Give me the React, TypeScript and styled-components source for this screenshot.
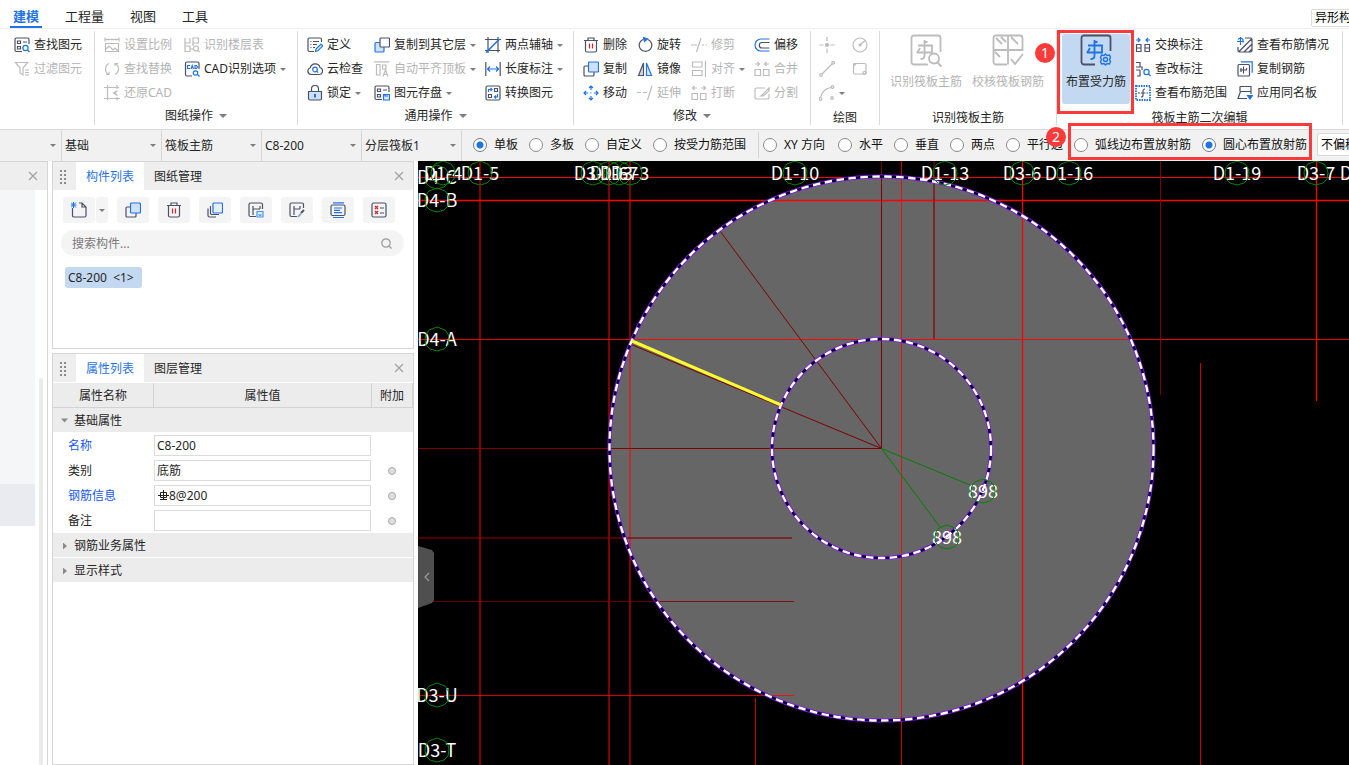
import React from 'react';
import styled, { createGlobalStyle, css } from 'styled-components';

const ink = '#4b5166';
const blue = '#1f73e6';
const mute = '#bcbcbc';
const red = '#e02020';
const mark = '#fb3a3a';

const Global = createGlobalStyle`
  * { box-sizing: border-box; }
  html, body, #root { height: 100%; }
  body { margin: 0; overflow: hidden; background: #fff; }
  body, button, input, select {
    font-family: "Noto Sans", "Noto Sans CJK SC", sans-serif;
    font-size: 12px;
    line-height: 16px;
    color: #262626;
  }
  button { border: 0; padding: 0; background: none; cursor: pointer; }
`;

/* ---------- icons ---------- */

const Svg = styled.svg<{ $c?: string; $bold?: boolean }>`
  flex: none;
  display: block;
  fill: none;
  stroke: ${p => p.$c || ink};
  stroke-width: ${p => (p.$bold ? 1.8 : 1.2)};
`;

const drawings: Record<string, React.ReactNode> = {
  find: <><path d="M8 14.500H2.500a1.500 1.500 0 0 1-1.500-1.500V2.500A1.500 1.500 0 0 1 2.500 1h11A1.500 1.500 0 0 1 15 2.500V7M3.500 4h3v2.500h-3zM3.500 9.500h3V12h-3zM9 5h4" /><g stroke={blue}><circle cx="11.500" cy="11" r="2.600" /><path d="M13.500 13l2 2" /></g></>,
  filter: <path d="M1.500 1.500h12L9 7v7L6 12V7zM11 9h4M11 11.500h4M11 14h4" />,
  scale: <path d="M1 2.500h14M1 .5v4M15 .5v4M4 1.500v2M8 1.500v2M12 1.500v2M1.500 6.500h13v8h-13zM2 12l3-3 4 4 2-2 3 3" />,
  floorTable: <><path d="M1 1v5h5V1M9 1h5.500v5H9zM1 9h5v5.500H1zM9 6v3M6 12h3M1 6v3" /><circle cx="12" cy="11.500" r="2.500" /><path d="M14 13.500l1.500 1.500" /></>,
  replace: <path d="M5 2.500A6.300 6.300 0 0 0 4.500 13.500M2 13.500h3V11M11 13.500A6.300 6.300 0 0 0 11.500 2.500M14 2.500H11V5" />,
  cad: <><path d="M8 15H3a1.500 1.500 0 0 1-1.500-1.500V2.500A1.500 1.500 0 0 1 3 1h10.500A1.500 1.500 0 0 1 15 2.500V8" /><g stroke={blue}><path d="M6 4.500H3.500v3H6M7 8l1.200-3.500L9.500 8M11 4.500v3h1.500l1-1.500-1-1.500z" /><circle cx="11.500" cy="12" r="2.200" /><path d="M13.500 13.500l2 2" /></g></>,
  restore: <path d="M3.500 0v15M0 2.500h15M0 13.500h16M13 0v4M13 12v3.500M13.500 5.500L9.500 8l4 2.500M9.500 8h3" />,
  define: <><path d="M7 14.500H2.500A1.500 1.500 0 0 1 1 13V2.500A1.500 1.500 0 0 1 2.500 1H13a1.500 1.500 0 0 1 1.500 1.500V5M3.500 4.500h1M6 4.500h6M3.500 7.500h1M6 7.500h4M3.500 10.500h1M6 10.500h2" /><path stroke={blue} fill="#dcebff" d="M8.500 14.500l.5-2.500 5-5 1.800 1.800-5 5z" /></>,
  cloud: <><path d="M4 13.500a3.500 3.500 0 0 1-.7-6.800A5 5 0 0 1 13 6.500a3.600 3.600 0 0 1-.5 7z" /><g stroke={blue}><circle cx="8" cy="8.500" r="2.300" /><path d="M9.700 10.200l1.500 1.500" /></g></>,
  lock: <><path fill="#cfe1fa" d="M1.500 6.500h13v7a1.500 1.500 0 0 1-1.500 1.500H3a1.500 1.500 0 0 1-1.500-1.500z" /><path d="M4.500 6.500V4a3.500 3.500 0 0 1 7 0v2.500" /><path stroke={blue} strokeWidth="2" d="M8 9v3.500" /></>,
  copyLayer: <><rect x="1" y="5.500" width="9" height="9.500" rx="1" fill="#cfe1fa" stroke={blue} /><rect x="6" y="1" width="9.500" height="9" rx="1" fill="#fff" /></>,
  alignTop: <path d="M0 .8h15.500M2.500 3.500H6V14H2.500zM8.500 4H12v4H8.500zM9 15.500l2.500-6.500 2.500 6.500M10 13.500h3" />,
  save: <><path d="M8 14.500H2.500A1.500 1.500 0 0 1 1 13V2.500A1.500 1.500 0 0 1 2.500 1h11A1.500 1.500 0 0 1 15 2.500V7M3.500 4h3v2.500h-3zM3.500 9.500h3V12h-3zM9 5h4" /><path fill="#dcebff" stroke={blue} d="M9.500 9.500h6v5.500h-6zM11 9.500V11h3" /></>,
  axis: <><path d="M3 0v16M0 2.500h16M0 13.500h15M13 0v15.500" /><path stroke={blue} strokeWidth="1.600" d="M1 15.500L14.500 2" /></>,
  length: <><path d="M.8 1v14M15.200 1v14" /><path stroke={blue} d="M2.500 8h11M5 5.500L2.500 8 5 10.500M11 5.500L13.500 8 11 10.500" /></>,
  convert: <><rect x="1" y="1" width="14" height="14" rx="1.500" /><path d="M9.500 3.500h3v3h-3zM3.500 9.500h3v3h-3z" /><path stroke={blue} d="M3.500 7V4.500h3M5.500 3l1.500 1.500L5.500 6M12.500 9v3h-3M11 10.500L9.500 12l1.500 1.500" /></>,
  trash: <><path d="M5 3V1h6v2M1 3.500h14M2.500 3.500v10A1.500 1.500 0 0 0 4 15h8a1.500 1.500 0 0 0 1.500-1.500v-10" /><path stroke={red} d="M6.500 6.500v5M9.500 6.500v5" /></>,
  rotate: <><path d="M10.500 2.200a6.300 6.300 0 1 1-4 0" /><path stroke={blue} fill={blue} d="M6.500 .5L10.500 2 7.500 4.500z" /></>,
  trim: <path d="M0 8h6M11 8h2M14.500 8h1.500M10 1L5.500 15" />,
  offset: <><path stroke={blue} d="M15.500 2H7a6 6 0 0 0 0 12h8.500" /><path d="M15.500 5.500H8a2.700 2.700 0 0 0 0 5.500h7.500" /></>,
  copy: <><rect x="1" y="5" width="10" height="10" rx="1" /><rect x="5.500" y="1" width="10" height="10" rx="1" fill="#cfe1fa" stroke={blue} /></>,
  mirror: <><path d="M6.500 2v12.500H1.500z" fill="#d6d9e2" /><path stroke={blue} fill="#dcebff" d="M9.500 2v12.500h5z" /></>,
  alignTo: <path d="M1.500 1h9.500v5H1.500zM1.500 9.500h9.500v5H1.500zM14.500 0v16" />,
  merge: <path d="M1 8.500h5.500v6H1zM9.500 8.500H15v6H9.500zM1 3h4.500M3.500 1l2 2-2 2M15 3h-4.500M12.500 1l-2 2 2 2" />,
  move: <path stroke={blue} d="M8 1v4M8 11v4M1 8h4M11 8h4M6 3l2-2 2 2M6 13l2 2 2-2M3 6L1 8l2 2M13 6l2 2-2 2M7.500 8h1" />,
  extend: <path d="M0 7.500h4M6 7.500h4M15 1l-4.500 14" />,
  breakUp: <path d="M1 8.500h5.500v6H1zM9.500 8.500H15v6H9.500zM6 3H1.500M3.500 1l-2 2 2 2M10 3h4.500M12.500 1l2 2-2 2" />,
  split: <path d="M11 3H2.500A1.500 1.500 0 0 0 1 4.500v8A1.500 1.500 0 0 0 2.500 14h11a1.500 1.500 0 0 0 1.500-1.500V9M7 11l8-8v3l-6 5z" />,
  point: <><path d="M8 0v4M8 11.500V16M.5 8h4M11.500 8h4" /><circle cx="8" cy="8" r="1.500" fill={mute} /></>,
  circle: <><circle cx="8" cy="8" r="7" /><path d="M8 8l5-4.500" /><circle cx="8" cy="8" r="1" /></>,
  line: <><path d="M3 13L13.500 2.500" /><circle cx="2" cy="14" r="1.300" /><circle cx="14.200" cy="1.800" r="1.300" /></>,
  rect: <><rect x="1.500" y="2.500" width="12.500" height="10.500" rx="1.500" /><circle cx="12.500" cy="12" r="1.500" /><circle cx="2.500" cy="3.500" r=".8" /></>,
  arc: <><path d="M1.500 12.500A12 12 0 0 1 12 2.500" /><circle cx="1.500" cy="14" r="1.300" /><circle cx="13.500" cy="2" r="1.300" /><circle cx="13" cy="13" r="1.300" /></>,
  swap: <><path stroke={blue} d="M1 3h4M3 1l2 2-2 2M15 3h-4M13 1l-2 2 2 2" /><path d="M1.500 7.500h4.500v7H1.500zM1.500 11h4.500M10 7.500h4.500v7H10zM10 11h4.500" /></>,
  modify: <><path d="M1 1.500h4v4M1 6h6v3M5 9v6H2M1 9h4" /><g stroke={blue}><circle cx="11.500" cy="11" r="2.600" /><path d="M13.500 13l2 2" /></g></>,
  range: <><rect x="1" y="1" width="14" height="14" stroke={blue} strokeWidth="1.800" strokeDasharray="1.500 1" /><path d="M3 8h2M6 8h4.500M11.500 8H13M10 4a2 2 0 0 0-2 2v4a2 2 0 0 1-2 2" /></>,
  status: <><path d="M8 1h5.500A1.500 1.500 0 0 1 15 2.500v11a1.500 1.500 0 0 1-1.500 1.500h-11A1.500 1.500 0 0 1 1 13.500V10M2 14.500L14.500 2M7 15l8-8M12 15l3-3" /><path stroke={blue} d="M0 4.500h7M3.500 0v8M1 2.500a3 3 0 0 1 5 0v3" /></>,
  copyBar: <><path stroke={blue} d="M4 .8h11.200v11" /><rect x="1" y="3.500" width="11.500" height="11.500" rx="1" /><path d="M3 9h7M6.500 5.500v7M9.500 7v2M4 7v4" /></>,
  apply: <><path d="M3 1.500h11v5H3.500L1 13.500h9M14 6.500V9M3 1.500v5" /><path stroke={blue} fill={blue} d="M10.500 10.500h5L13 14z" /></>,
  newDoc: <><path d="M1.500 6v8A1.500 1.500 0 0 0 3 15h10.500a1.500 1.500 0 0 0 1.500-1.500V5l-4-4H8M11 1v4h4" /><path stroke={blue} strokeWidth="1" d="M0 .5l5 5M0 5.500l5-5M2.500 0v6M0 3h5.500" /></>,
  copies: <><path d="M9 15H2.500A1.500 1.500 0 0 1 1 13.500V6.500" /><rect x="6" y="1" width="9.500" height="10" rx="1" fill="#e6f0fd" stroke={blue} /><path d="M3.500 4v7A1.500 1.500 0 0 0 5 12.500h7" /></>,
  saveTo: <><path d="M8 14.500H2.500A1.500 1.500 0 0 1 1 13V2.500A1.500 1.500 0 0 1 2.500 1H13a1.500 1.500 0 0 1 1.500 1.500V7M5 4v9M5 7h7M12 4v3" /><path fill="#dcebff" stroke="#4c96ee" d="M9 9.500h6V15H9zM10.500 12.500l1.500 1 1.500-1" /></>,
  pick: <><path d="M8 14.500H2.500A1.500 1.500 0 0 1 1 13V2.500A1.500 1.500 0 0 1 2.500 1H13a1.500 1.500 0 0 1 1.500 1.500V6M5 4v9M5 7h6M11 4v3" /><path strokeWidth="2" d="M12 11l3-3" /><path stroke="#8aa4cc" strokeWidth="1.800" d="M9 15l3.500-4" /></>,
  listUp: <><rect x="1" y="3" width="14" height="10.500" rx="1.500" /><path stroke={blue} d="M3 .8h11M3 15.500h11M4 6h8M4 8.300h6M4 10.600h8" /></>,
  checklist: <><rect x="1" y="1" width="14" height="14" rx="1.500" /><path d="M9 6h4M9 11h4" /><path stroke={red} d="M4 4l3 3M7 4l-3 3M4 9l3 3M7 9l-3 3" /></>,
};

const Icon = ({ n, c }: { n: string; c?: string }) => (
  <Svg width="16" height="16" viewBox="0 0 16 16" $c={c} aria-hidden="true">{drawings[n]}</Svg>
);

const Caret = styled.i<{ $big?: boolean }>`
  flex: none;
  width: 0;
  height: 0;
  border: ${p => (p.$big ? 4 : 3)}px solid transparent;
  border-top-color: #7d7d7d;
  border-bottom: 0;
`;

const Cross = () => (
  <Svg width="10" height="10" viewBox="0 0 10 10" $c="#a2a2a2" aria-hidden="true"><path d="M1 1l8 8M9 1L1 9" /></Svg>
);

/* ---------- page frame ---------- */

const Page = styled.div`
  display: flex;
  flex-direction: column;
  height: 100vh;
  overflow: hidden;
`;

const MenuBar = styled.nav`
  display: flex;
  flex: none;
  gap: 20px;
  height: 29px;
  padding-left: 10px;
  border-bottom: 1px solid #efefef;
`;

const MenuTab = styled.button<{ $on?: boolean }>`
  padding: 5px 3px 0;
  font-size: 13px;
  line-height: 20px;
  border-bottom: 2px solid transparent;
  ${p => p.$on && css`color: ${blue}; font-weight: 700; border-color: ${blue};`}
`;

const MenuExtra = styled.div`
  margin: 9px 0 0 auto;
  width: 38px;
  overflow: hidden;
`;

const ExtraButton = styled.button`
  height: 18px;
  width: 60px;
  padding-left: 3px;
  text-align: left;
  border: 1px solid #dcdcdc;
  border-radius: 2px;
  color: #000;
`;

/* ---------- ribbon ---------- */

const Ribbon = styled.div`
  display: flex;
  flex: none;
  height: 101px;
  padding-top: 2px;
  border-bottom: 1px solid #d9d9d9;
`;

const Group = styled.section<{ $w: number }>`
  display: flex;
  flex: none;
  flex-direction: column;
  width: ${p => p.$w}px;
  height: 94px;
  border-right: 1px solid #dadada;
`;

const GroupBody = styled.div<{ $pad: number }>`
  display: flex;
  flex: none;
  height: 76px;
  padding: 2px 0 0 ${p => p.$pad}px;
`;

const Column = styled.div<{ $w: number }>`
  flex: none;
  width: ${p => p.$w}px;
`;

const Tool = styled.button<{ $off?: boolean }>`
  display: flex;
  align-items: center;
  gap: 4px;
  height: 24px;
  white-space: nowrap;
  ${p => p.$off && css`color: #b4b4b4;`}
`;

const GroupTitle = styled.div<{ $low?: boolean }>`
  display: flex;
  align-items: center;
  justify-content: center;
  gap: 6px;
  height: 18px;
  padding-top: ${p => (p.$low ? 4 : 0)}px;
`;

type Item = { i: string; t?: string; off?: boolean; drop?: boolean };

const Tools = ({ w, items }: { w: number; items: Item[] }) => (
  <Column $w={w}>
    {items.map(x => (
      <Tool key={x.i} $off={x.off} disabled={x.off} aria-label={x.t || x.i}>
        <Icon n={x.i} c={x.off ? mute : undefined} />
        {x.t}
        {x.drop && <Caret />}
      </Tool>
    ))}
  </Column>
);

const BigTool = styled.button<{ $state?: 'on' | 'off' }>`
  position: relative;
  display: flex;
  flex: none;
  flex-direction: column;
  align-items: center;
  gap: 6px;
  width: ${p => (p.$state === 'on' ? 68 : 82)}px;
  height: 70px;
  margin-top: 1px;
  border-radius: 3px;
  white-space: nowrap;
  ${p => (p.$state === 'on' ? css`background: #c2d9f1;` : css`color: #b4b4b4;`)}
`;

const Highlight = styled.span<{ $inset: string }>`
  position: absolute;
  z-index: 3;
  inset: ${p => p.$inset};
  border: 3px solid ${mark};
  pointer-events: none;
`;

const Badge = styled.span<{ $x: number; $y: number }>`
  position: absolute;
  z-index: 4;
  left: ${p => p.$x}px;
  top: ${p => p.$y}px;
  width: 20px;
  height: 20px;
  border-radius: 50%;
  background: ${mark};
  color: #fff;
  font-size: 14px;
  line-height: 20px;
  text-align: center;
`;

const BarGlyph = () => <path d="M8 11.500h14V18M7 18.500h16M10 14l-3 5M14.500 6v16q0 3-4 3M14.500 8h3" />;

/* ---------- option bar ---------- */

const OptionBar = styled.div`
  position: relative;
  z-index: 2;
  display: flex;
  flex: none;
  align-items: flex-start;
  height: 31px;
  background: #f1f1f1;
`;

const Pick = styled.div<{ $w: number }>`
  display: flex;
  flex: none;
  align-items: center;
  width: ${p => p.$w}px;
  height: 31px;
  padding-right: 5px;
  border-right: 1px solid #d6d6d6;
`;

const Select = styled.select`
  appearance: none;
  flex: 1;
  min-width: 0;
  height: 24px;
  padding: 0 0 0 3px;
  border: 0;
  background: none;
`;

const Radios = styled.div<{ $gap: number }>`
  position: relative;
  display: flex;
  flex: none;
  align-items: center;
  gap: 11px;
  height: 29px;
  margin-left: ${p => p.$gap}px;
`;

const RadioLabel = styled.label`
  display: flex;
  align-items: center;
  gap: 7px;
  color: #111;
  white-space: nowrap;
`;

const Radio = styled.input`
  appearance: none;
  width: 14px;
  height: 14px;
  margin: 0;
  border: 1px solid #8a8a8a;
  border-radius: 50%;
  background: #fff;
  &:checked { background: radial-gradient(circle, ${blue} 3px, #fff 4px); border-color: #6a7a90; }
`;

const Rule = styled.span`
  flex: none;
  width: 1px;
  height: 26px;
  margin: 2px 0 0 12px;
  background: #d4d4d4;
`;

const OffsetSelect = styled.select`
  appearance: none;
  flex: none;
  width: 90px;
  height: 23px;
  margin: 3px 0 0 10px;
  padding: 0 3px;
  border: 1px solid #d9d9d9;
  border-radius: 2px;
  background: #fff;
  color: #000;
`;

const RadioSet = ({ name, items, on, gap, children }: { name: string; items: string[]; on?: string; gap: number; children?: React.ReactNode }) => (
  <Radios $gap={gap}>
    {items.map(t => (
      <RadioLabel key={t}><Radio type="radio" name={name} defaultChecked={t === on} />{t}</RadioLabel>
    ))}
    {children}
  </Radios>
);

/* ---------- side panels ---------- */

const Work = styled.div`
  display: flex;
  flex: 1;
  min-height: 0;
`;

const Stub = styled.aside`
  display: flex;
  flex: none;
  flex-direction: column;
  width: 48px;
  border: solid #d6d6d6;
  border-width: 1px 1px 0 0;
`;

const StubHead = styled.div`
  display: flex;
  flex: none;
  align-items: center;
  justify-content: flex-end;
  height: 28px;
  padding-right: 9px;
  background: #eeeeef;
`;

const StubBody = styled.div`
  display: flex;
  flex: 1;
  justify-content: space-between;
  padding-right: 4px;
`;

const Tree = styled.div`
  width: 35px;
  height: 336px;
  padding-top: 294px;
  background: #f5f6f8;
`;

const TreeRow = styled.div`
  height: 42px;
  background: #e9ebf0;
`;

const Scroll = styled.div`
  width: 4px;
  margin-top: 188px;
  border-radius: 2px;
  background: #ebebeb;
`;

const Side = styled.aside`
  display: flex;
  flex: none;
  flex-direction: column;
  gap: 4px;
  width: 370px;
  padding: 0 4px;
`;

const Panel = styled.section<{ $h?: number }>`
  flex: ${p => (p.$h ? 'none' : 1)};
  height: ${p => (p.$h ? `${p.$h}px` : 'auto')};
  border: 1px solid #d6d6d6;
  background: #fff;
`;

const PanelHead = styled.div`
  display: flex;
  align-items: center;
  height: 28px;
  padding: 0 9px 0 6px;
  background: #eeeeef;
  button:last-child { margin-left: auto; }
`;

const Grip = styled.i`
  width: 7px;
  height: 15px;
  margin-right: 10px;
  background: radial-gradient(circle, #8b8b8b 1px, transparent 1px) 0 0 / 4px 4px;
`;

const PanelTab = styled.button<{ $on?: boolean }>`
  width: 68px;
  height: 28px;
  padding-top: 2px;
  ${p => p.$on && css`background: #fff; color: ${blue};`}
`;

const Actions = styled.div`
  display: flex;
  gap: 9px;
  padding: 7px 10px;
`;

const Action = styled.button<{ $w?: number }>`
  display: flex;
  align-items: center;
  justify-content: center;
  width: ${p => p.$w || 32}px;
  height: 26px;
  border-radius: 3px;
  background: #f4f4f4;
`;

const Pair = styled.div`
  display: flex;
  gap: 1px;
`;

const Search = styled.label`
  display: flex;
  align-items: center;
  height: 26px;
  margin: 0 9px 0 8px;
  padding: 0 12px 0 11px;
  border-radius: 13px;
  background: #f4f4f4;
`;

const SearchInput = styled.input`
  flex: 1;
  padding: 1px 0 0;
  border: 0;
  outline: 0;
  background: none;
  &::placeholder { color: #7a7a7a; opacity: 1; }
`;

const Part = styled.button`
  min-width: 77px;
  height: 21px;
  margin: 11px 12px;
  padding: 0 3px;
  border-radius: 3px;
  background: #c2d9f1;
  text-align: left;
  white-space: pre;
`;

const Table = styled.table`
  width: 360px;
  margin-top: 1px;
  table-layout: fixed;
  border-collapse: separate;
  border-spacing: 0;
`;

const Head = styled.th`
  height: 25px;
  padding: 2px 0 0;
  font-weight: 400;
  background: #ececec;
  border: solid #d3d3d3;
  border-width: 0 1px 1px 0;
`;

const Section = styled.th`
  height: 25px;
  padding: 2px 0 0 8px;
  text-align: left;
  background: #ececec;
  border-bottom: 1px solid #fff;
`;

const SectionButton = styled.button`
  display: flex;
  align-items: center;
  gap: 6px;
`;

const Twist = styled.i<{ $open?: boolean }>`
  width: 7px;
  height: 7px;
  background: #8a8a8a;
  clip-path: ${p => (p.$open ? 'polygon(0 1px, 100% 1px, 50% 5px)' : 'polygon(2px 0, 6px 50%, 2px 100%)')};
`;

const Name = styled.th<{ $key?: boolean }>`
  height: 25px;
  padding: 0 0 0 15px;
  text-align: left;
  font-weight: 400;
  color: ${p => (p.$key ? '#1657f5' : '#262626')};
`;

const Cell = styled.td`
  height: 25px;
  padding: 0 1px 0 0;
`;

const Field = styled.div`
  display: flex;
  align-items: center;
  height: 21px;
  padding-left: 2px;
  border: 1px solid #dcdcdc;
`;

const FieldInput = styled.input`
  flex: 1;
  min-width: 0;
  height: 16px;
  padding: 0;
  border: 0;
  outline: 0;
  background: none;
`;

const Dot = styled.input`
  appearance: none;
  display: block;
  width: 8px;
  height: 8px;
  margin: 0 auto;
  border: 1px solid #a8a8a8;
  border-radius: 50%;
  background: #dedede;
`;

const rows = [
  { name: '名称', value: 'C8-200', key: true },
  { name: '类别', value: '底筋', extra: true },
  { name: '钢筋信息', value: '8@200', key: true, extra: true, rebar: true },
  { name: '备注', value: '', extra: true },
];

/* ---------- drawing area ---------- */

const Stage = styled.main`
  position: relative;
  flex: 1;
  min-width: 0;
  overflow: hidden;
  background: #000;
`;

const Drawing = styled.svg`
  display: block;
  width: 100%;
  height: 100%;
  fill: none;
  text {
    fill: #fff;
    font-family: "Noto Sans CJK SC", sans-serif;
    font-size: 18px;
    text-anchor: middle;
  }
`;

const Handle = styled.button`
  position: absolute;
  left: 0;
  top: 385px;
  width: 16px;
  height: 62px;
  background: #4f4f4f;
  clip-path: polygon(0 0, 14px 4px, 100% 7px, 100% 54px, 14px 57px, 0 100%);
  svg { margin: 0 auto; }
`;

const labels: [number, number, string][] = [
  [437, 177, 'D4-C'], [443, 173, 'D1-4'], [480, 173, 'D1-5'],
  [593, 173, 'D3-1'], [609, 173, 'D1-6'], [619, 173, 'D1-7'], [630, 173, 'D3-3'],
  [795, 173, 'D1-10'], [945, 173, 'D1-13'], [1022, 173, 'D3-6'], [1069, 173, 'D1-16'],
  [1237, 173, 'D1-19'], [1316, 173, 'D3-7'], [1364, 173, 'D1-22'],
  [437, 200, 'D4-B'], [437, 339, 'D4-A'], [437, 695, 'D3-U'], [437, 750, 'D3-T'],
  [983, 491, '898'], [947, 537, '898'],
];

const Ring = ({ r }: { r: number }) => (
  <>
    <circle cx="881.500" cy="448.500" r={r} stroke="#9010ff" strokeWidth="4" />
    <circle cx="881.500" cy="448.500" r={r} stroke="#000030" strokeWidth="2.400" />
    <circle cx="881.500" cy="448.500" r={r} stroke="#fff" strokeWidth="2.400" strokeDasharray="7.500 4.500" />
  </>
);

const Plan = () => (
  <Drawing role="img" aria-label="筏板主筋">
    <g transform="translate(-418 -161)">
      <circle cx="881.500" cy="448.500" r="272" fill="#666" />
      <path stroke="#f00" strokeOpacity=".5" strokeWidth="2" d="M480 161V2000M609 161V2000M630 161V2000" />
      <g stroke="#f00">
        <path d="M418 177.500H3000" />
        <path d="M1022.500 161V2000M1316.500 161V401M418 200.500H3000" strokeWidth="1.300" />
        <path strokeOpacity=".8" d="M901.500 161V2000M1200.500 363V2000M755.500 698V2000M418 695.500H794" />
        <path strokeOpacity=".9" d="M418 339.500H3000" />
      </g>
      <g stroke="#800000">
        <path d="M881.500 161V448.500L720 231M881.500 448.500L630 344M418 448.500H881M1160.500 161V395" />
        <path strokeOpacity=".6" strokeWidth="2" d="M934 161V339M418 538H792" />
        <path strokeOpacity=".8" d="M418 601.500H794" />
      </g>
      <path stroke="#008000" d="M881.500 448.500L970 485M881.500 448.500L940 527" />
      <Ring r={272} />
      <Ring r={109.5} />
      <path stroke="#ffff30" strokeWidth="3" d="M632 341L781 405" />
      {labels.map(([x, y, t]) => (
        <g key={t + x} transform={`translate(${x} ${y})`}>
          <text y="7">{t}</text>
          <path stroke="#008400" d="M0-12L8-9 11-5 12 0 11 6 7 10 0 12-7 10-11 6-12 0-11-5-8-9z" />
        </g>
      ))}
    </g>
  </Drawing>
);

const picks: [number, string][] = [[62, ''], [100, '基础'], [100, '筏板主筋'], [100, 'C8-200'], [100, '分层筏板1']];

const actions: [string, string][] = [
  ['copy', '复制'], ['trash', '删除'], ['copies', '层间复制'], ['saveTo', '存档'],
  ['pick', '提取'], ['listUp', '排序'], ['checklist', '过滤'],
];

export default function App() {
  return (
    <Page>
      <Global />
      <MenuBar>
        <MenuTab $on>建模</MenuTab>
        <MenuTab>工程量</MenuTab>
        <MenuTab>视图</MenuTab>
        <MenuTab>工具</MenuTab>
        <MenuExtra><ExtraButton>异形构</ExtraButton></MenuExtra>
      </MenuBar>

      <Ribbon>
        <Group $w={95}>
          <GroupBody $pad={14}>
            <Tools w={80} items={[{ i: 'find', t: '查找图元' }, { i: 'filter', t: '过滤图元', off: true }]} />
          </GroupBody>
        </Group>
        <Group $w={203}>
          <GroupBody $pad={9}>
            <Tools w={80} items={[{ i: 'scale', t: '设置比例', off: true }, { i: 'replace', t: '查找替换', off: true }, { i: 'restore', t: '还原CAD', off: true }]} />
            <Tools w={110} items={[{ i: 'floorTable', t: '识别楼层表', off: true }, { i: 'cad', t: 'CAD识别选项', drop: true }]} />
          </GroupBody>
          <GroupTitle>图纸操作<Caret $big /></GroupTitle>
        </Group>
        <Group $w={276}>
          <GroupBody $pad={9}>
            <Tools w={67} items={[{ i: 'define', t: '定义' }, { i: 'cloud', t: '云检查' }, { i: 'lock', t: '锁定', drop: true }]} />
            <Tools w={111} items={[{ i: 'copyLayer', t: '复制到其它层', drop: true }, { i: 'alignTop', t: '自动平齐顶板', off: true, drop: true }, { i: 'save', t: '图元存盘', drop: true }]} />
            <Tools w={84} items={[{ i: 'axis', t: '两点辅轴', drop: true }, { i: 'length', t: '长度标注', drop: true }, { i: 'convert', t: '转换图元' }]} />
          </GroupBody>
          <GroupTitle>通用操作<Caret $big /></GroupTitle>
        </Group>
        <Group $w={237}>
          <GroupBody $pad={9}>
            <Tools w={54} items={[{ i: 'trash', t: '删除' }, { i: 'copy', t: '复制' }, { i: 'move', t: '移动' }]} />
            <Tools w={54} items={[{ i: 'rotate', t: '旋转' }, { i: 'mirror', t: '镜像' }, { i: 'extend', t: '延伸', off: true }]} />
            <Tools w={63} items={[{ i: 'trim', t: '修剪', off: true }, { i: 'alignTo', t: '对齐', off: true, drop: true }, { i: 'breakUp', t: '打断', off: true }]} />
            <Tools w={44} items={[{ i: 'offset', t: '偏移' }, { i: 'merge', t: '合并', off: true }, { i: 'split', t: '分割', off: true }]} />
          </GroupBody>
          <GroupTitle>修改<Caret $big /></GroupTitle>
        </Group>
        <Group $w={69}>
          <GroupBody $pad={8}>
            <Tools w={33} items={[{ i: 'point', off: true }, { i: 'line', off: true }, { i: 'arc', off: true, drop: true }]} />
            <Tools w={20} items={[{ i: 'circle', off: true }, { i: 'rect', off: true }]} />
          </GroupBody>
          <GroupTitle $low>绘图</GroupTitle>
        </Group>
        <Group $w={177}>
          <GroupBody $pad={5}>
            <BigTool $state="off" disabled>
              <Svg width="32" height="34" viewBox="0 0 32 34" $c={mute} $bold aria-hidden="true">
                <path d="M18 30.500H4A2.500 2.500 0 0 1 1.500 28V4A2.500 2.500 0 0 1 4 1.500h24A2.500 2.500 0 0 1 30.500 4v14" />
                <BarGlyph />
                <circle cx="24" cy="24.500" r="5" /><path d="M27.500 28.500l4 4" />
              </Svg>
              识别筏板主筋
            </BigTool>
            <BigTool $state="off" disabled>
              <Svg width="32" height="34" viewBox="0 0 32 34" $c={mute} $bold aria-hidden="true">
                <path d="M15 30.500H4A2.500 2.500 0 0 1 1.500 28V4A2.500 2.500 0 0 1 4 1.500h24A2.500 2.500 0 0 1 30.500 4v13M16 1.500v29M1.500 16h29M4 4l6 6M9 3l5 5M19 3l7 7M3 18l5 5M19 25l4 5 8-10" />
              </Svg>
              校核筏板钢筋
            </BigTool>
          </GroupBody>
          <GroupTitle $low>识别筏板主筋</GroupTitle>
        </Group>
        <Group $w={286}>
          <GroupBody $pad={5}>
            <BigTool $state="on">
              <Svg width="32" height="34" viewBox="0 0 32 34" $bold aria-hidden="true">
                <path d="M15 30.500H4A2.500 2.500 0 0 1 1.500 28V4A2.500 2.500 0 0 1 4 1.500h24A2.500 2.500 0 0 1 30.500 4v13" />
                <g stroke={blue}>
                  <BarGlyph />
                  <path strokeWidth="1.400" d="M25.500 20l1.500 1.500 2.500-.5 1 2.500-1 2 1 2-1 2.500-2.500-.5-1.500 1.500-1.500-1.500-2.500.5-1-2.500 1-2-1-2 1-2.500 2.500.5z" />
                  <circle strokeWidth="1.400" cx="25.500" cy="25.500" r="2" />
                </g>
              </Svg>
              布置受力筋
              <Highlight $inset="-4px -4px -10px -5px" />
              <Badge $x={-27} $y={9}>1</Badge>
            </BigTool>
            <Column $w={5} />
            <Tools w={102} items={[{ i: 'swap', t: '交换标注' }, { i: 'modify', t: '查改标注' }, { i: 'range', t: '查看布筋范围' }]} />
            <Tools w={100} items={[{ i: 'status', t: '查看布筋情况' }, { i: 'copyBar', t: '复制钢筋' }, { i: 'apply', t: '应用同名板' }]} />
          </GroupBody>
          <GroupTitle $low>筏板主筋二次编辑</GroupTitle>
        </Group>
      </Ribbon>

      <OptionBar>
        {picks.map(([w, t], k) => (
          <Pick key={k} $w={w}>
            <Select aria-label={t || '楼层'}><option>{t}</option></Select>
            <Caret />
          </Pick>
        ))}
        <RadioSet name="slab" gap={11} on="单板" items={['单板', '多板', '自定义', '按受力筋范围']} />
        <Rule />
        <RadioSet name="dir" gap={4} items={['XY 方向']} />
        <RadioSet name="dir" gap={13} items={['水平', '垂直', '两点', '平行边']} />
        <RadioSet name="dir" gap={11} on="圆心布置放射筋" items={['弧线边布置放射筋', '圆心布置放射筋']}>
          <Highlight $inset="-7px -5px -1px -6px" />
          <Badge $x={-28} $y={-3}>2</Badge>
        </RadioSet>
        <OffsetSelect aria-label="偏移"><option>不偏移</option></OffsetSelect>
      </OptionBar>

      <Work>
        <Stub>
          <StubHead><button aria-label="关闭"><Cross /></button></StubHead>
          <StubBody>
            <Tree><TreeRow /></Tree>
            <Scroll />
          </StubBody>
        </Stub>

        <Side>
          <Panel $h={188}>
            <PanelHead>
              <Grip />
              <PanelTab $on>构件列表</PanelTab>
              <PanelTab>图纸管理</PanelTab>
              <button aria-label="关闭"><Cross /></button>
            </PanelHead>
            <Actions>
              <Pair>
                <Action aria-label="新建"><Icon n="newDoc" /></Action>
                <Action $w={12} aria-label="更多"><Caret /></Action>
              </Pair>
              {actions.map(([n, t]) => (
                <Action key={n} aria-label={t}><Icon n={n} /></Action>
              ))}
            </Actions>
            <Search>
              <SearchInput placeholder="搜索构件..." aria-label="搜索构件" />
              <Svg width="11" height="11" viewBox="0 0 11 11" $c="#9a9a9a" aria-hidden="true"><circle cx="5" cy="5" r="4.200" /><path d="M8 8l2.500 2.500" /></Svg>
            </Search>
            <Part>{'C8-200  <1>'}</Part>
          </Panel>

          <Panel>
            <PanelHead>
              <Grip />
              <PanelTab $on>属性列表</PanelTab>
              <PanelTab>图层管理</PanelTab>
              <button aria-label="关闭"><Cross /></button>
            </PanelHead>
            <Table>
              <colgroup><col width="101" /><col width="218" /><col width="41" /></colgroup>
              <thead>
                <tr><Head>属性名称</Head><Head>属性值</Head><Head>附加</Head></tr>
              </thead>
              <tbody>
                <tr><Section colSpan={3}><SectionButton><Twist $open />基础属性</SectionButton></Section></tr>
                {rows.map(r => (
                  <tr key={r.name}>
                    <Name $key={r.key}>{r.name}</Name>
                    <Cell>
                      <Field>
                        {r.rebar && (
                          <Svg width="12" height="12" viewBox="0 0 12 12" $c="#222" aria-hidden="true">
                            <path d="M6.500 0v10M1 5.500h11M3.500 2.500h6v5h-6zM3 9.500h7" strokeWidth="1" />
                          </Svg>
                        )}
                        <FieldInput defaultValue={r.value} aria-label={r.name} />
                      </Field>
                    </Cell>
                    <Cell>{r.extra && <Dot type="checkbox" aria-label={`${r.name}附加`} />}</Cell>
                  </tr>
                ))}
                <tr><Section colSpan={3}><SectionButton><Twist />钢筋业务属性</SectionButton></Section></tr>
                <tr><Section colSpan={3}><SectionButton><Twist />显示样式</SectionButton></Section></tr>
              </tbody>
            </Table>
          </Panel>
        </Side>

        <Stage>
          <Plan />
          <Handle aria-label="收起">
            <Svg width="7" height="10" viewBox="0 0 7 10" $c="#9a9a9a" aria-hidden="true"><path d="M6 1L2 5l4 4" /></Svg>
          </Handle>
        </Stage>
      </Work>
    </Page>
  );
}
